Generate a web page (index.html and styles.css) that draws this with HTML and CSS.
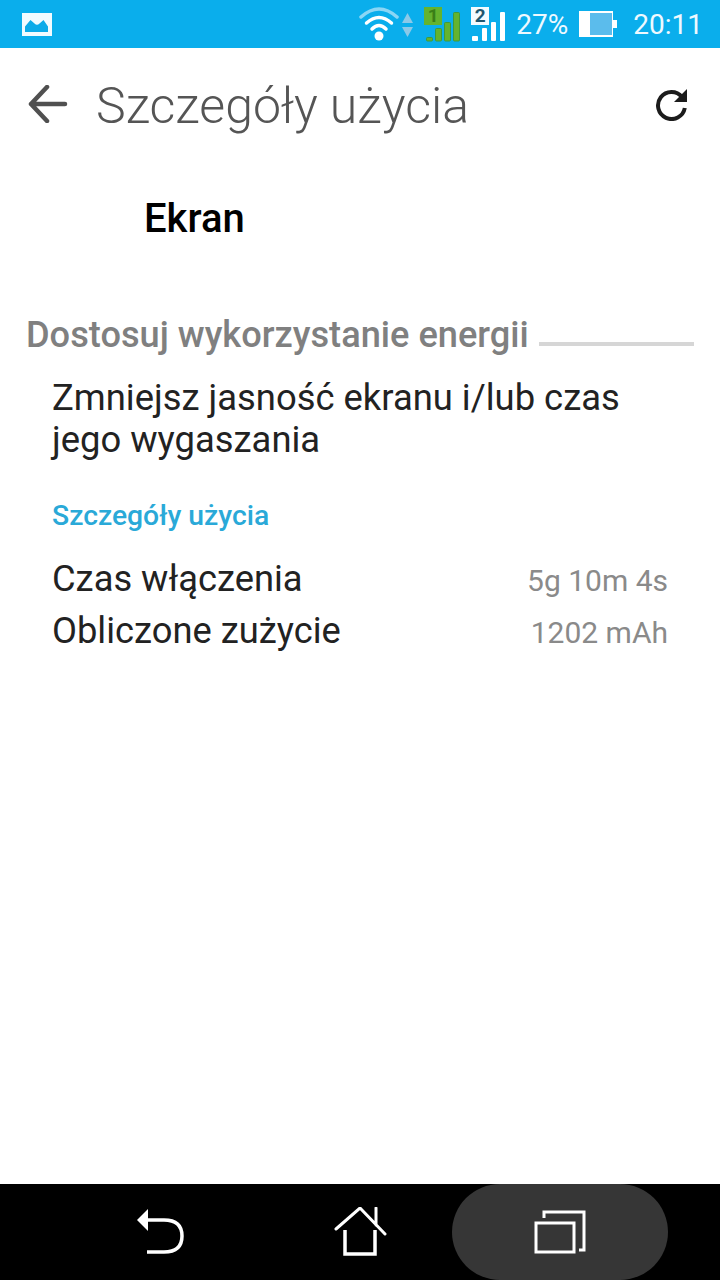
FILE: index.html
```html
<!DOCTYPE html>
<html lang="pl">
<head>
<meta charset="utf-8">
<title>Szczegóły użycia</title>
<link rel="stylesheet" href="styles.css">
</head>
<body>
<div class="screen">
  <header class="status">
    <svg class="st-pic" width="30" height="24" viewBox="0 0 30 24"><rect y="1" width="30" height="23" fill="#f2fbff"/><path d="M3 20V14.5L8.500 8 L12.500 11.500 Q15 14 17.500 11.500 L21.500 8 L26 14.500V20Z" fill="#0cabe9"/></svg>
    <div class="st-right">
      <svg class="st-wifi" width="54" height="40" viewBox="0 0 54 40"><path d="M2 13Q20 -3 38 13" fill="none" stroke="#8ad6f5" stroke-width="3.5" stroke-linecap="round"/><path d="M7.500 19Q20 8 32.500 19" fill="none" stroke="#fff" stroke-width="3.500" stroke-linecap="round"/><path d="M13 25Q20 18 27 25" fill="none" stroke="#fff" stroke-width="3.500" stroke-linecap="round"/><circle cx="20" cy="32" r="4.500" fill="#fff"/><path d="M48.500 9l5.500 10h-11z" fill="#8bc9e8"/><path d="M48.500 33l5.500-10h-11z" fill="#8bc9e8"/></svg>
      <div class="sim sim-1">
        <span class="sim-box sim-box-1">1</span>
        <svg width="38" height="38" viewBox="0 0 38 38"><g fill="#64b32e" stroke="#3f9a3a" stroke-width="1"><rect x="2.500" y="33.500" width="6" height="3.500" rx="1"/><rect x="11.500" y="24.500" width="6" height="12.500" rx="1"/><rect x="20.500" y="18.500" width="6" height="18.500" rx="1"/><rect x="29.500" y="8.500" width="6" height="28.500" rx="1"/></g></svg>
      </div>
      <div class="sim sim-2">
        <span class="sim-box sim-box-2">2</span>
        <svg width="38" height="38" viewBox="0 0 38 38"><g fill="#fff"><rect x="1" y="32" width="6" height="5" rx="1"/><rect x="11" y="24" width="5" height="13" rx="1"/><rect x="20" y="18" width="5" height="19" rx="1"/><rect x="29" y="8" width="5" height="29" rx="1"/></g></svg>
      </div>
      <span class="st-pct">27%</span>
      <svg class="st-batt" width="40" height="26" viewBox="0 0 40 26"><rect width="34" height="26" fill="#fff"/><rect x="11" y="2" width="22" height="22" fill="#5bbcec"/><rect x="34" y="9" width="4" height="8" fill="#fff"/></svg>
      <span class="st-time">20:11</span>
    </div>
  </header>

  <div class="appbar">
    <svg class="ab-back" width="40" height="38" viewBox="0 0 40 38"><path d="M19 2L3 19L19 36M3 19H37" fill="none" stroke="#505050" stroke-width="4.500" stroke-linecap="round" stroke-linejoin="round"/></svg>
    <h1 class="ab-title">Szczegóły użycia</h1>
    <svg class="ab-refresh" width="34" height="34" viewBox="0 0 34 34"><path d="M27 10A13.500 13.500 0 1 0 29.800 21" fill="none" stroke="#1c1c1c" stroke-width="4"/><path d="M32 2V15H19Z" fill="#1c1c1c"/></svg>
  </div>

  <main class="content">
    <div class="app-name">Ekran</div>
    <div class="section">
      <span class="section-label">Dostosuj wykorzystanie energii</span>
      <span class="section-rule"></span>
    </div>
    <p class="advice">Zmniejsz jasność ekranu i/lub czas jego wygaszania</p>
    <div class="sub-label">Szczegóły użycia</div>
    <div class="row row-first"><span class="row-key">Czas włączenia</span><span class="row-val">5g 10m 4s</span></div>
    <div class="row"><span class="row-key">Obliczone zużycie</span><span class="row-val">1202 mAh</span></div>
  </main>

  <nav class="navbar">
    <svg class="nav-back" width="50" height="46" viewBox="0 0 50 46"><path d="M12 0V22L1 11Z" fill="#fff"/><path d="M10 11H28Q46 11 46 27Q46 43 28 43H11" fill="none" stroke="#fff" stroke-width="3.500"/></svg>
    <svg class="nav-home" width="54" height="50" viewBox="0 0 54 50"><path d="M2 22L26 1L51 27M42 1V18" fill="none" stroke="#fff" stroke-width="3" stroke-linecap="round"/><path d="M11 23V47H41V23" fill="none" stroke="#fff" stroke-width="3.500"/></svg>
    <div class="nav-recent">
      <svg width="52" height="44" viewBox="0 0 52 44"><path d="M10 8V2H50V40H45" fill="none" stroke="#fff" stroke-width="3"/><rect x="2" y="13" width="38" height="29" fill="none" stroke="#fff" stroke-width="3"/></svg>
    </div>
  </nav>
</div>
</body>
</html>
```
FILE: styles.css
```css
* { box-sizing: border-box; }
html, body { margin: 0; padding: 0; }
body { background: #fff; font-family: Roboto, "Noto Sans", sans-serif; }
.screen { width: 720px; height: 1280px; display: flex; flex-direction: column; overflow: hidden; }

.status { flex: none; height: 48px; background: #0aaeec; display: flex; align-items: center; justify-content: space-between; padding: 0 17px 0 22px; color: #eef9ff; }
.st-pic { display: block; }
.st-right { display: flex; align-items: center; }
.st-wifi { display: block; margin-right: 11px; }
.sim { position: relative; width: 38px; height: 40px; margin-right: 9px; }
.sim-2 { margin-right: 7px; }
.sim svg { display: block; }
.sim-box { position: absolute; left: 0; top: 3px; width: 18px; height: 18px; font: 700 19px/18px Roboto, sans-serif; text-align: center; }
.sim-box-1 { background: #64b32e; color: #3a7f17; }
.sim-box-2 { background: #f2fbff; color: #20566e; }
.st-pct { font-size: 28px; font-weight: 400; margin-right: 11px; }
.st-batt { display: block; margin-right: 14px; }
.st-time { font-size: 28px; font-weight: 400; }

.appbar { flex: none; height: 112px; display: flex; align-items: center; padding: 0 31px 0 28px; }
.ab-back { display: block; margin-right: 28px; }
.ab-title { margin: 3px 0 0; flex: 1; font-size: 50px; font-weight: 300; color: #555; line-height: 1; }
.ab-refresh { display: block; }

.content { flex: 1; padding: 0 26px; }
.app-name { margin-left: 118px; margin-top: 35px; font-size: 40px; font-weight: 500; color: #000; line-height: 48px; }
.section { display: flex; align-items: center; margin-top: 70px; height: 44px; }
.section-label { font-size: 36.200px; font-weight: 500; color: #808080; line-height: 44px; }
.section-rule { flex: 1; height: 4px; background: #d6d6d6; margin-left: 10px; margin-top: 18px; }
.advice { margin: 20px 26px 0; font-size: 36.400px; line-height: 42px; color: #222; }
.sub-label { margin: 37px 26px 0; font-size: 28.300px; font-weight: 500; color: #2aa9d8; line-height: 36px; }
.row { display: flex; justify-content: space-between; align-items: center; height: 52px; padding: 0 26px; }
.row-first { margin-top: 18px; }
.row-key { font-size: 36.300px; color: #222; }
.row-val { font-size: 30px; color: #8a8a8a; padding-top: 4px; }

.navbar { flex: none; height: 96px; background: #000; display: flex; align-items: center; padding-left: 136px; }
.nav-back { display: block; margin-right: 148px; }
.nav-home { display: block; margin-right: 64px; }
.nav-recent { width: 216px; height: 96px; border-radius: 70px; background: #363636; display: flex; align-items: center; justify-content: center; }
.nav-recent svg { display: block; }
```
